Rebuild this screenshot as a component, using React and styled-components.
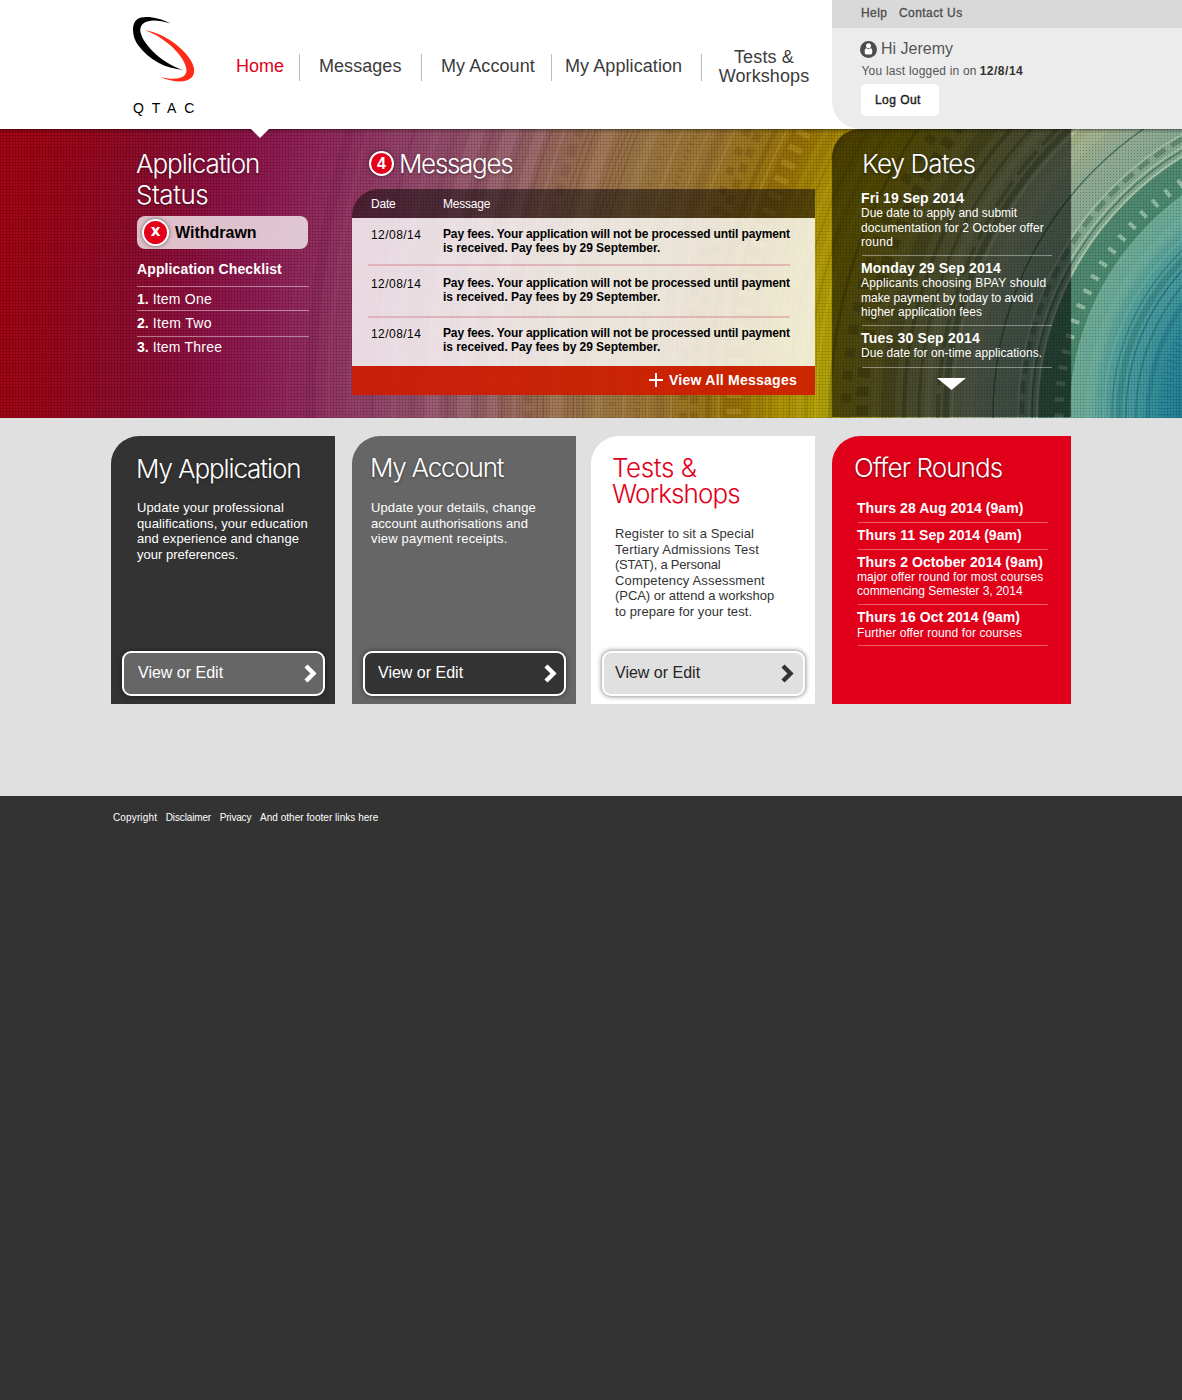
import React from 'react';
import styled, { createGlobalStyle, css } from 'styled-components';

const sans = '"Liberation Sans", Arial, Helvetica, sans-serif';
const light = 'Inter, "Helvetica Neue", Arial, sans-serif';

const GlobalStyle = createGlobalStyle`
  * { box-sizing: border-box; }
  body {
    margin: 0;
    background: #333;
    font-family: ${sans};
    color: #333;
  }
  a { color: inherit; text-decoration: none; }
  h1, h2, h3, p, ul, ol { margin: 0; padding: 0; list-style: none; }
  button { font-family: inherit; cursor: pointer; }
`;

/* ---------- shared text ---------- */

const Line = styled.span`
  display: block;
  white-space: nowrap;
  letter-spacing: ${(p) => p.$ls || 0}px;
`;

const Lines = ({ rows }) => rows.map(([text, ls]) => (
  <Line key={text} $ls={ls}>{text}</Line>
));

const Heading = styled.h2`
  margin-left: -1px;
  font-family: ${light};
  font-weight: 300;
  font-size: 26px;
  line-height: ${(p) => p.$leading || 31}px;
  color: ${(p) => p.$color || '#fff'};
  text-shadow: ${(p) => (p.$flat ? 'none' : '0 1px 3px rgba(0, 0, 0, 0.45)')};
`;

/* ---------- header ---------- */

const Header = styled.header`
  display: flex;
  height: 129px;
  background: #fff;
`;

const Brand = styled.a`
  display: flex;
  flex-direction: column;
  width: 88px;
  margin-left: 132px;
  padding-top: 16px;
`;

const BrandName = styled.span`
  margin: 15px 0 0 1px;
  font-size: 14px;
  line-height: 16px;
  letter-spacing: 7.8px;
  color: #000;
  white-space: nowrap;
`;

const Nav = styled.nav`
  display: flex;
  align-items: center;
  height: 27px;
  margin-top: 54px;
  width: 612px;
`;

const NavItem = styled.a`
  display: flex;
  flex-direction: column;
  justify-content: center;
  align-items: ${(p) => (p.$centered ? 'center' : 'flex-start')};
  width: ${(p) => p.$width}px;
  height: 27px;
  padding-left: ${(p) => p.$pad}px;
  padding-bottom: 2px;
  border-left: ${(p) => (p.$first ? 'none' : '1px solid #bdbdbd')};
  font-size: 18px;
  line-height: 19px;
  color: ${(p) => (p.$active ? '#e2001a' : '#3b3b3b')};
`;

const Account = styled.aside`
  display: flex;
  flex-direction: column;
  width: 350px;
  height: 129px;
  overflow: hidden;
  background: #ececec;
  border-bottom-left-radius: 28px;
`;

const Utility = styled.div`
  display: flex;
  gap: 11.5px;
  height: 28px;
  padding: 0 0 2px 29px;
  align-items: center;
  background: #d9d9d9;
  font-size: 12px;
  line-height: 14px;
  color: #4f4f4f;
  -webkit-text-stroke: 0.35px #4f4f4f;
`;

const Greeting = styled.div`
  display: flex;
  align-items: center;
  gap: 4px;
  height: 18px;
  margin: 12px 0 0 28px;
  font-size: 16px;
  line-height: 18px;
  color: #555;
`;

const LastLogin = styled.p`
  display: flex;
  gap: 3px;
  margin: 6px 0 0 29.5px;
  font-size: 12px;
  line-height: 14px;
  color: #555;
  white-space: nowrap;
`;

const LoginDate = styled.strong`
  color: #333;
  letter-spacing: 0.5px;
`;

const LogOut = styled.button`
  width: 78px;
  height: 32px;
  margin: 6px 0 0 29px;
  padding: 0 0 0 14px;
  border: 0;
  border-radius: 5px;
  background: #fff;
  color: #1c1c1c;
  font-size: 12px;
  letter-spacing: 0.45px;
  text-align: left;
  -webkit-text-stroke: 0.4px #1c1c1c;
`;

/* ---------- hero ---------- */

const Hero = styled.section`
  position: relative;
  height: 289px;
  overflow: hidden;
  background: #8a2a58;
`;

const HeroArt = styled.svg`
  position: absolute;
  inset: 0;
  width: 100%;
  height: 100%;
`;

const Pointer = styled.span`
  position: absolute;
  top: -1px;
  left: 250px;
  width: 20px;
  height: 10px;
  background: #fff;
  clip-path: polygon(0 0, 100% 0, 50% 100%);
`;

const HeroColumns = styled.div`
  position: relative;
  display: grid;
  grid-template-columns: 224px 463px 239px;
  column-gap: 17px;
  margin-left: 111px;
`;

const Status = styled.div`
  padding: 18.5px 0 0 26px;
  color: #fff;
`;

const StatusPill = styled.div`
  display: flex;
  align-items: center;
  gap: 6px;
  width: 171px;
  height: 33px;
  margin-top: 6.5px;
  padding-left: 5px;
  border-radius: 8px;
  background: rgba(255, 255, 255, 0.74);
  color: #000;
  font-size: 16px;
  font-weight: 700;
`;

const Badge = styled.span`
  display: flex;
  align-items: center;
  justify-content: center;
  width: ${(p) => p.$size}px;
  height: ${(p) => p.$size}px;
  border: 2px solid #fff;
  border-radius: 50%;
  background: #e2001a;
  box-shadow: 0 0 4px rgba(0, 0, 0, 0.5);
  color: #fff;
  font-size: 16px;
  line-height: 20px;
  font-weight: 700;
`;

const CrossBadge = styled(Badge)`
  font-family: "DejaVu Sans", sans-serif;
  font-size: 15px;
  padding-bottom: 3px;
`;

const ChecklistTitle = styled.h3`
  margin-top: 12px;
  font-size: 14px;
  line-height: 16px;
`;

const Checklist = styled.ol`
  width: 172px;
  margin-top: 9px;
  font-size: 14px;
  line-height: 16px;
`;

const ChecklistItem = styled.li`
  display: flex;
  gap: 4px;
  height: ${(p) => p.$height}px;
  padding-top: ${(p) => p.$top}px;
  border-top: 1px solid rgba(255, 255, 255, 0.45);
`;

const MessagesTitle = styled.div`
  display: flex;
  align-items: center;
  gap: 6px;
  height: 29px;
  margin: 20px 0 11px;
  padding-left: 17px;
`;

const Table = styled.div`
  display: flex;
  flex-direction: column;
  border-top-left-radius: 27px;
  overflow: hidden;
`;

const TableHead = styled.div`
  display: grid;
  grid-template-columns: 72px 1fr;
  align-items: center;
  height: 29px;
  padding-left: 19px;
  background: rgba(20, 12, 12, 0.55);
  color: #fff;
  font-size: 12px;
`;

const TableBody = styled.div`
  height: 148px;
  padding: 0 25px 0 16px;
  background: rgba(255, 255, 255, 0.81);
`;

const MessageRow = styled.div`
  display: grid;
  grid-template-columns: 72px 1fr;
  height: ${(p) => p.$height}px;
  padding: ${(p) => p.$top}px 0 0 3px;
  border-bottom: ${(p) => (p.$last ? 'none' : '2px solid rgba(205, 90, 110, 0.32)')};
  font-size: 12px;
  line-height: 14px;
  color: #000;
`;

const MessageDate = styled.span`
  padding-top: 1px;
  letter-spacing: 0.45px;
`;

const ViewAll = styled.a`
  display: flex;
  align-items: center;
  justify-content: flex-end;
  gap: 6px;
  height: 29px;
  padding: 0 18px 1px 0;
  background: rgba(207, 28, 0, 0.9);
  color: #fff;
  font-size: 14px;
  line-height: 16px;
  font-weight: 700;
`;

const KeyDates = styled.div`
  height: 288px;
  padding: 18.5px 19px 0 30px;
  border-top-left-radius: 28px;
  background: rgba(0, 0, 0, 0.56);
  color: #fff;
`;

const KeyDatesHeading = styled(Heading)`
  margin-left: 0;
`;

/* ---------- date lists ---------- */

const DateList = styled.ul`
  color: #fff;
  padding-top: ${(p) => p.$top}px;
  width: 190px;
`;

const OfferList = styled(DateList)`
  margin-left: 3px;
`;

const DateItem = styled.li`
  padding: ${(p) => p.$top ?? 4}px 0 ${(p) => p.$bottom}px;
  border-bottom: 1px solid ${(p) => p.$rule || 'rgba(255, 255, 255, 0.4)'};
`;

const DateTitle = styled.h3`
  margin-left: -1px;
  font-size: 14px;
  line-height: 16px;
`;

const DateText = styled.p`
  margin: ${(p) => p.$gap || 0}px 0 0 -1px;
  font-size: 12px;
  line-height: ${(p) => p.$leading || 14.5}px;
`;

const MoreArrow = styled.svg`
  display: block;
  margin: 10px 0 0 75px;
`;

/* ---------- cards ---------- */

const Main = styled.main`
  height: 378px;
  padding: 18px 0 0 111px;
  background: #e0e0e0;
`;

const Cards = styled.div`
  display: grid;
  grid-template-columns: 241px 239px 241px 239px;
`;

const palettes = {
  dark: css`background: #333; color: #fff;`,
  grey: css`background: #666; color: #fff;`,
  white: css`background: #fff; color: #333;`,
  red: css`background: #e0001a; color: #fff;`,
};

const Card = styled.article`
  display: flex;
  flex-direction: column;
  width: ${(p) => p.$width || 224}px;
  height: 268px;
  padding: ${(p) => p.$pad};
  border-top-left-radius: 28px;
  ${(p) => palettes[p.$tone]}
`;

const CardText = styled.p`
  margin-top: ${(p) => p.$gap}px;
  padding-left: ${(p) => p.$indent || 0}px;
  font-size: 13px;
  line-height: 15.6px;
`;

const buttonTones = {
  grey: css`background: #666; color: #fff; border-color: #fff; box-shadow: 0 0 5px rgba(0, 0, 0, 0.5);`,
  dark: css`background: #333; color: #fff; border-color: #fff; box-shadow: 0 0 5px rgba(0, 0, 0, 0.5);`,
  light: css`background: #e0e0e0; color: #262626; border-color: #fff; box-shadow: 0 0 4px 1px rgba(0, 0, 0, 0.4);`,
};

const CardButton = styled.button`
  display: flex;
  align-items: center;
  justify-content: space-between;
  width: 203px;
  height: 45px;
  margin: auto 0 8px ${(p) => p.$shift}px;
  padding: 0 ${(p) => p.$right}px 1px ${(p) => p.$left}px;
  border: 2px solid;
  border-radius: 9px;
  font-size: 16px;
  line-height: 18px;
  ${(p) => buttonTones[p.$tone]}
`;

/* ---------- footer ---------- */

const Footer = styled.footer`
  display: flex;
  gap: 8.7px;
  padding: 16px 0 0 113px;
  height: 604px;
  background: #333;
  color: #fff;
  font-size: 10px;
  line-height: 12px;
`;

/* ---------- drawings ---------- */

const Swoosh = () => (
  <svg width="64" height="69" viewBox="132 16 64 69">
    <path d="M170.500 23.600C158 17 143 15 137 19.500C131 24 132 37 138 45C149 60 165 68.500 184 70C164 65 143 45 140.500 32C138.500 22 150 16.500 170.500 23.600Z" fill="#000" />
    <path d="M145 30.200C167 33 193 55 194.200 69.500C195 83 178 84.500 160 77C175 80.500 186.500 79 186.500 70C186 57 165 37 145 30.200Z" fill="#ff2a17" />
  </svg>
);

const UserIcon = () => (
  <svg width="17" height="17" viewBox="0 0 17 17">
    <circle cx="8.500" cy="8.500" r="8.500" fill="#4d4d4d" />
    <circle cx="8.500" cy="4.800" r="2.500" fill="#fff" />
    <path d="M4.800 11.800V9.200C4.800 8 5.600 7.200 6.700 7.200H10.300C11.400 7.200 12.200 8 12.200 9.200V11.800C12.200 12.900 11.500 13.400 10.600 13.400H6.400C5.500 13.400 4.800 12.900 4.800 11.800Z" fill="#fff" />
    <path d="M7.500 7.700H9.500" stroke="#4d4d4d" strokeWidth="1" />
  </svg>
);

const Plus = () => (
  <svg width="14" height="14" viewBox="0 0 14 14">
    <path d="M7 0V14M0 7H14" stroke="#fff" strokeWidth="2" />
  </svg>
);

const Chevron = ({ color = '#fff' }) => (
  <svg width="13" height="19" viewBox="0 0 13 19">
    <path d="M2 2L9.500 9.500L2 17" fill="none" stroke={color} strokeWidth="4.400" />
  </svg>
);

const stops = [
  [158, '#1b768c'], [180, '#2a8694'], [205, '#3d9398'], [228, '#4c9a98'],
  [250, '#62a594'], [270, '#6ba791'],
  [304, '#7da38e'], [350, '#8fa890'], [390, '#a0a97c'], [430, '#9fa35c'],
  [480, '#a59c28'], [520, '#ab9a00'], [560, '#a68b00'], [615, '#967008'],
  [680, '#95702c'], [740, '#94703e'], [800, '#92694c'], [870, '#8c5560'],
  [950, '#8b4464'], [1030, '#8a2858'], [1100, '#86154a'], [1160, '#840b38'],
  [1230, '#860724'], [1290, '#900216'], [1345, '#98000f'],
];

/* radius, stroke width, colour, opacity, dash */
const rings = [
  [176, 12, '#0d5f7c', 0.25, '2 4'], [192, 5, '#0f6070', 0.3], [204, 2, '#115c62', 0.4],
  [214, 1.5, '#0e5560', 0.5], [221, 6, '#1c6a68', 0.35], [228, 1.5, '#175b5b', 0.4],
  [236, 2, '#7fc0b4', 0.3], [250, 10, '#8fc4ac', 0.15],
  [286, 31, '#33745a', 0.66], [281, 9, '#a8cdb4', 0.7, '4 12'],
  [303, 2, '#b4d2b4', 0.7], [308, 1.5, '#376650', 0.7], [311, 2, '#b4d2b4', 0.55],
  [318, 5, '#3d6c52', 0.5, '13 7'], [322, 2, '#b9cfae', 0.5],
  [347, 1.5, '#35604b', 0.75], [372, 12, '#bccdb0', 0.18],
  [388, 2.5, '#c3d2a8', 0.55], [394, 6, '#4f6a38', 0.5], [402, 4, '#55702e', 0.5, '30 8'],
  [412, 7, '#c8cf94', 0.28], [421, 3, '#4a5d20', 0.4], [436, 4, '#3b4a18', 0.35],
  [452, 14, '#454a08', 0.2], [466, 2, '#d8d070', 0.22], [478, 12, '#332f00', 0.26, '10 9'],
  [494, 10, '#332f00', 0.22, '9 14'], [510, 3, '#4f4700', 0.3],
  [524, 3, '#c8b62a', 0.3], [534, 2, '#756700', 0.3], [541, 5, '#c8b62a', 0.2],
  [551, 2, '#756700', 0.3], [560, 3, '#c3a21a', 0.25], [570, 1.5, '#6d5600', 0.3],
  [580, 8, '#7a5a00', 0.18], [592, 5, '#7a5200', 0.25], [606, 22, '#7b5200', 0.28],
  [606, 15, '#c7a030', 0.34, '6 11'], [622, 2, '#c9a44a', 0.3], [632, 5, '#714c08', 0.35],
  [646, 8, '#613c08', 0.25, '9 8'], [657, 8, '#613c08', 0.25, '8 13'],
  [669, 2, '#c4a066', 0.25], [680, 9, '#6d481a', 0.18], [692, 2, '#c4a066', 0.22],
  [703, 6, '#6d481a', 0.2, '3 4'], [716, 3, '#c4a078', 0.2], [728, 6, '#73491f', 0.2, '3 11'],
  [742, 9, '#c8a078', 0.14], [757, 2, '#6b4029', 0.28], [762, 1.5, '#6b4029', 0.28],
  [767, 2, '#6b4029', 0.28], [772, 1.5, '#6b4029', 0.25], [784, 13, '#c9a090', 0.17],
  [797, 2, '#6a3a34', 0.28], [803, 2, '#6a3a34', 0.25], [812, 9, '#6a3a34', 0.18, '13 8'],
  [826, 3, '#c99a98', 0.18], [838, 2, '#6a3440', 0.25], [848, 10, '#c794a4', 0.18],
  [863, 2, '#6a3044', 0.2], [876, 14, '#c794a8', 0.18], [893, 4, '#6a2848', 0.17],
  [908, 14, '#c78aa8', 0.15], [928, 6, '#6a2448', 0.15], [946, 6, '#c780a0', 0.1],
  [968, 3, '#641c44', 0.18], [986, 16, '#c06890', 0.06], [1012, 5, '#c06890', 0.08],
  [1030, 10, '#5e0c38', 0.12], [1052, 3, '#c05080', 0.06],
];

const HeroBackground = () => (
  <HeroArt viewBox="0 0 1182 289" preserveAspectRatio="none">
    <defs>
      <radialGradient id="spectrum" gradientUnits="userSpaceOnUse" cx="1340" cy="286" r="1400">
        {stops.map(([r, c]) => <stop key={r} offset={r / 1400} stopColor={c} />)}
      </radialGradient>
      <pattern id="mesh" width="3" height="3" patternUnits="userSpaceOnUse">
        <rect x="0" y="0" width="1" height="1" fill="#000" opacity=".24" />
        <rect x="1" y="1" width="2" height="2" fill="#fff" opacity=".035" />
      </pattern>
      <linearGradient id="lip" x1="0" y1="0" x2="0" y2="1">
        <stop offset="0" stopColor="#000" stopOpacity=".35" />
        <stop offset="1" stopColor="#000" stopOpacity="0" />
      </linearGradient>
    </defs>
    <rect width="1182" height="289" fill="url(#spectrum)" />
    <g fill="none">
      {rings.map(([r, w, c, o, d]) => (
        <circle key={`${r}-${w}`} cx="1340" cy="286" r={r} stroke={c} strokeWidth={w} strokeOpacity={o} strokeDasharray={d} />
      ))}
    </g>
    <rect width="1182" height="289" fill="url(#mesh)" />
    <rect width="1182" height="4" fill="url(#lip)" />
  </HeroArt>
);

/* ---------- content ---------- */

const navItems = [
  { rows: [['Home', 0]], width: 79, pad: 16, first: true, active: true },
  { rows: [['Messages', 0.05]], width: 122, pad: 19 },
  { rows: [['My Account', 0.08]], width: 130, pad: 19 },
  { rows: [['My Application', 0.08]], width: 150, pad: 13 },
  { rows: [['Tests &', 0.15], ['Workshops', 0.1]], width: 125, pad: 0, centered: true },
];

const messages = [
  { id: 1, height: 48, top: 9 },
  { id: 2, height: 52, top: 10 },
  { id: 3, height: 48, top: 8 },
];

const messageText = [
  ['Pay fees. Your application will not be processed until payment', -0.13],
  ['is received. Pay fees by 29 September.', -0.06],
];

const keyDates = [
  { title: ['Fri 19 Sep 2014', 0.08], bottom: 5.5, text: [
    ['Due date to apply and submit', 0], ['documentation for 2 October offer', 0.11], ['round', 0.3],
  ] },
  { title: ['Monday 29 Sep 2014', 0.16], bottom: 5.5, text: [
    ['Applicants choosing BPAY should', 0.21], ['make payment by today to avoid', -0.02], ['higher application fees', 0.04],
  ] },
  { title: ['Tues 30 Sep 2014', 0.2], bottom: 6.5, text: [['Due date for on-time applications.', 0.05]] },
];

const offerRounds = [
  { title: ['Thurs 28 Aug 2014 (9am)', 0.05], top: 0, bottom: 6 },
  { title: ['Thurs 11 Sep 2014 (9am)', 0.06], bottom: 6 },
  { title: ['Thurs 2 October 2014 (9am)', 0.06], bottom: 6, text: [
    ['major offer round for most courses', 0.09], ['commencing Semester 3, 2014', -0.02],
  ] },
  { title: ['Thurs 16 Oct 2014 (9am)', 0.05], bottom: 5, gap: 1, text: [['Further offer round for courses', 0.08]] },
];

const DateEntries = ({ items, leading, rule }) => items.map((item) => (
  <DateItem key={item.title[0]} $top={item.top} $bottom={item.bottom} $rule={rule}>
    <DateTitle><Line $ls={item.title[1]}>{item.title[0]}</Line></DateTitle>
    {item.text && (
      <DateText $leading={leading} $gap={item.gap}><Lines rows={item.text} /></DateText>
    )}
  </DateItem>
));

export default function App() {
  return (
    <>
      <GlobalStyle />
      <Header>
        <Brand href="#">
          <Swoosh />
          <BrandName>QTAC</BrandName>
        </Brand>
        <Nav>
          {navItems.map((item) => (
            <NavItem
              key={item.rows[0][0]}
              href="#"
              $width={item.width}
              $pad={item.pad}
              $first={item.first}
              $active={item.active}
              $centered={item.centered}
            >
              <Lines rows={item.rows} />
            </NavItem>
          ))}
        </Nav>
        <Account>
          <Utility>
            <a href="#"><Line $ls={0.45}>Help</Line></a>
            <a href="#"><Line $ls={0.43}>Contact Us</Line></a>
          </Utility>
          <Greeting><UserIcon />Hi Jeremy</Greeting>
          <LastLogin>
            <Line $ls={0.2}>You last logged in on</Line>
            <LoginDate>12/8/14</LoginDate>
          </LastLogin>
          <LogOut>Log Out</LogOut>
        </Account>
      </Header>

      <Hero>
        <HeroBackground />
        <Pointer />
        <HeroColumns>
          <Status>
            <Heading><Lines rows={[['Application', -1.02], ['Status', -0.5]]} /></Heading>
            <StatusPill><CrossBadge $size={27}>x</CrossBadge>Withdrawn</StatusPill>
            <ChecklistTitle><Line $ls={0.12}>Application Checklist</Line></ChecklistTitle>
            <Checklist>
              <ChecklistItem $height={24} $top={4}><b>1.</b><Line $ls={0.2}>Item One</Line></ChecklistItem>
              <ChecklistItem $height={26} $top={4}><b>2.</b><Line $ls={0.33}>Item Two</Line></ChecklistItem>
              <ChecklistItem $height={24} $top={2}><b>3.</b><Line $ls={0.2}>Item Three</Line></ChecklistItem>
            </Checklist>
          </Status>

          <div>
            <MessagesTitle>
              <Badge $size={25}>4</Badge>
              <Heading><Line $ls={-1.3}>Messages</Line></Heading>
            </MessagesTitle>
            <Table>
              <TableHead><Line $ls={-0.2}>Date</Line><Line $ls={-0.2}>Message</Line></TableHead>
              <TableBody>
                {messages.map((m) => (
                  <MessageRow key={m.id} $height={m.height} $top={m.top} $last={m.id === 3}>
                    <MessageDate>12/08/14</MessageDate>
                    <b><Lines rows={messageText} /></b>
                  </MessageRow>
                ))}
              </TableBody>
              <ViewAll href="#"><Plus /><Line $ls={0.25}>View All Messages</Line></ViewAll>
            </Table>
          </div>

          <KeyDates>
            <KeyDatesHeading><Line $ls={-0.9}>Key Dates</Line></KeyDatesHeading>
            <DateList $top={7.5}>
              <DateEntries items={keyDates} />
            </DateList>
            <MoreArrow width="29" height="12" viewBox="0 0 29 12">
              <path d="M0 0H29L14.500 12Z" fill="#fff" />
            </MoreArrow>
          </KeyDates>
        </HeroColumns>
      </Hero>

      <Main>
        <Cards>
          <Card $tone="dark" $pad="16.500px 0 0 26px">
            <Heading><Line $ls={-1.1}>My Application</Line></Heading>
            <CardText $gap={16.5}>
              <Lines rows={[
                ['Update your professional', 0.1], ['qualifications, your education', 0.11],
                ['and experience and change', 0.06], ['your preferences.', 0.01],
              ]} />
            </CardText>
            <CardButton $tone="grey" $shift={-15} $left={14} $right={6}>
              <Line>View or Edit</Line><Chevron />
            </CardButton>
          </Card>

          <Card $tone="grey" $pad="15.500px 0 0 19px">
            <Heading><Line $ls={-1.22}>My Account</Line></Heading>
            <CardText $gap={17.5}>
              <Lines rows={[
                ['Update your details, change', 0.11], ['account authorisations and', 0.06],
                ['view payment receipts.', 0.2],
              ]} />
            </CardText>
            <CardButton $tone="dark" $shift={-8} $left={13} $right={7}>
              <Line>View or Edit</Line><Chevron />
            </CardButton>
          </Card>

          <Card $tone="white" $pad="19px 0 0 22px">
            <Heading $leading={26} $color="#e2001a" $flat>
              <Lines rows={[['Tests &', -0.4], ['Workshops', -0.88]]} />
            </Heading>
            <CardText $gap={19} $indent={2}>
              <Lines rows={[
                ['Register to sit a Special', 0.1], ['Tertiary Admissions Test', 0.2],
                ['(STAT), a Personal', -0.22], ['Competency Assessment', 0.15],
                ['(PCA) or attend a workshop', -0.05], ['to prepare for your test.', 0.08],
              ]} />
            </CardText>
            <CardButton $tone="light" $shift={-11} $left={11} $right={9}>
              <Line>View or Edit</Line><Chevron color="#333" />
            </CardButton>
          </Card>

          <Card $tone="red" $width={239} $pad="15.500px 0 0 23px">
            <Heading><Line $ls={-0.92}>Offer Rounds</Line></Heading>
            <OfferList $top={17.5}>
              <DateEntries items={offerRounds} leading={14} rule="rgba(255, 255, 255, 0.36)" />
            </OfferList>
          </Card>
        </Cards>
      </Main>

      <Footer>
        <a href="#"><Line $ls={0.14}>Copyright</Line></a>
        <a href="#"><Line $ls={-0.14}>Disclaimer</Line></a>
        <a href="#"><Line $ls={-0.18}>Privacy</Line></a>
        <a href="#"><Line $ls={0.04}>And other footer links here</Line></a>
      </Footer>
    </>
  );
}
